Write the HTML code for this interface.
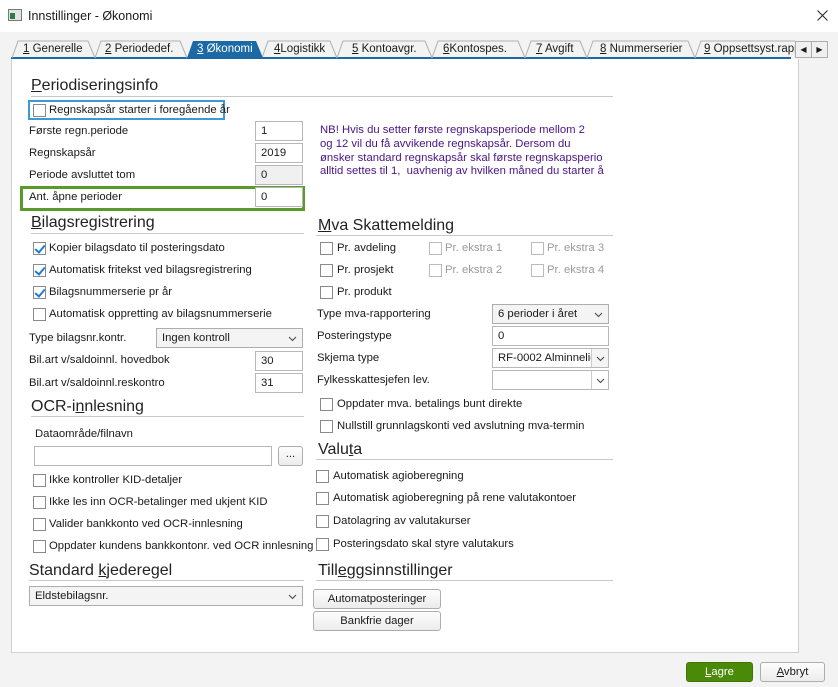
<!DOCTYPE html>
<html><head><meta charset="utf-8"><style>
*{margin:0;padding:0;box-sizing:border-box}
body{width:838px;height:687px;background:#f3f3f3;font-family:"Liberation Sans",sans-serif;font-size:11.3px;color:#1a1a1a;position:relative;overflow:hidden}
.a{position:absolute}
.t{position:absolute;font-size:11.3px;line-height:14px;white-space:nowrap}
.h{position:absolute;font-size:16px;line-height:18px;white-space:nowrap;color:#222}
.ln{position:absolute;height:1px;background:#c8c8c8}
.cb{position:absolute;width:13px;height:13px;border:1px solid #8a8a8a;background:#fff}
.cb.dis{border-color:#bbb}
.cb.on::after{content:"";position:absolute;left:3px;top:0px;width:4px;height:8px;border:solid #1e7bd0;border-width:0 2px 2px 0;transform:rotate(40deg)}
.in{position:absolute;background:#fff;border:1px solid #b8b8b8;font-size:11.3px;line-height:18px;padding-left:5px}
.sel{position:absolute;background:#f4f4f4;border:1px solid #adadad;font-size:11.3px;line-height:18px;padding-left:5px}
.sel svg{position:absolute;right:5px;top:7px}
.btn{position:absolute;background:linear-gradient(#fdfdfd,#ececec);border:1px solid #adadad;border-radius:3px;text-align:center;font-size:11.3px;line-height:18px}
.tab{position:absolute;top:41px;height:17px;font-size:11.5px;line-height:17px;white-space:nowrap}
u{text-decoration:underline}
.dis{color:#9a9a9a}
</style></head><body>
<div class="a" style="left:0;top:0;width:838px;height:32px;background:#fff"></div>
<div class="a" style="top:9px;left:8px;width:14px;height:12px;border:1px solid #777;background:#dfe6e6"><div style="position:absolute;left:1px;top:3px;width:5px;height:6px;background:#2f7a4a"></div></div>
<div class="t" style="left:28px;top:9px;font-size:12.5px">Innstillinger - Økonomi</div>
<svg class="a" style="left:817px;top:10px" width="11" height="11"><path d="M0.5 0.5 L10.5 10.5 M10.5 0.5 L0.5 10.5" stroke="#222" stroke-width="1"/></svg>

<!-- tabs -->
<div class="a" style="left:11px;top:57px;width:780px;height:2px;background:#1b6aa5"></div>
<svg class="a" style="left:0;top:40px" width="800" height="19">
<g fill="none" stroke="#b0b0b0">
<path d="M12 18 L18 1 H88 L95 18"/><path d="M95 18 L101 1 H180 L187 18"/>
<path d="M262 18 L268 1 H330 L337 18"/><path d="M337 18 L343 1 H425 L432 18"/>
<path d="M432 18 L438 1 H518 L525 18"/><path d="M525 18 L531 1 H580 L587 18"/>
<path d="M587 18 L593 1 H688 L695 18"/><path d="M695 18 L701 1 H795"/>
</g>
<path d="M187 18 L193 1 H256 L263 18 Z" fill="#1b6aa5"/>
</svg>
<div class="tab" style="left:23px"><u>1</u> Generelle</div>
<div class="tab" style="left:105px"><u>2</u> Periodedef.</div>
<div class="tab" style="left:197px;color:#fff"><u>3</u> Økonomi</div>
<div class="tab" style="left:274px"><u>4</u>Logistikk</div>
<div class="tab" style="left:352px"><u>5</u> Kontoavgr.</div>
<div class="tab" style="left:443px"><u>6</u>Kontospes.</div>
<div class="tab" style="left:536px"><u>7</u> Avgift</div>
<div class="tab" style="left:600px"><u>8</u> Nummerserier</div>
<div class="tab" style="left:704px;width:91px;overflow:hidden"><u>9</u> Oppsettsyst.rapp</div>
<div class="a" style="left:795px;top:41px;width:17px;height:17px;border:1px solid #adadad;background:#f0f0f0;font-size:8px;text-align:center;line-height:15px">◀</div>
<div class="a" style="left:811px;top:41px;width:17px;height:17px;border:1px solid #adadad;background:#f0f0f0;font-size:8px;text-align:center;line-height:15px">▶</div>

<!-- panel -->
<div class="a" style="left:11px;top:59px;width:788px;height:594px;background:#fff;border:1px solid #d0d0d0;border-top:none"></div>

<!-- Periodisering -->
<div class="h" style="left:31px;top:77px"><u>P</u>eriodiseringsinfo</div>
<div class="ln" style="left:31px;top:96px;width:582px"></div>
<div class="a" style="left:28px;top:100px;width:197px;height:20px;border:2px solid #3a9ad9"></div>
<div class="cb" style="left:33px;top:104px"></div>
<div class="t" style="left:49px;top:103px">Regnskapsår starter i foregående år</div>
<div class="t" style="left:29px;top:124px">Første regn.periode</div>
<div class="in" style="left:255px;top:121px;width:48px;height:20px">1</div>
<div class="t" style="left:29px;top:146px">Regnskapsår</div>
<div class="in" style="left:255px;top:143px;width:48px;height:20px">2019</div>
<div class="t" style="left:29px;top:168px">Periode avsluttet tom</div>
<div class="in" style="left:255px;top:165px;width:48px;height:20px;background:#f0f0f0">0</div>
<div class="a" style="left:20px;top:186px;width:285px;height:25px;border:3px solid #5a9a2a"></div>
<div class="t" style="left:29px;top:190px">Ant. åpne perioder</div>
<div class="in" style="left:255px;top:187px;width:48px;height:20px">0</div>

<div class="t" style="left:320px;top:124px;color:#4a1486;line-height:13.8px">NB! Hvis du setter første regnskapsperiode mellom 2<br>og 12 vil du få avvikende regnskapsår. Dersom du<br>ønsker standard regnskapsår skal første regnskapsperio<br>alltid settes til 1,&nbsp; uavhenig av hvilken måned du starter å</div>

<!-- Bilagsregistrering -->
<div class="h" style="left:31px;top:214px"><u>B</u>ilagsregistrering</div>
<div class="ln" style="left:31px;top:233px;width:273px"></div>
<div class="cb on" style="left:33px;top:242px"></div><div class="t" style="left:49px;top:241px">Kopier bilagsdato til posteringsdato</div>
<div class="cb on" style="left:33px;top:264px"></div><div class="t" style="left:49px;top:263px">Automatisk fritekst ved bilagsregistrering</div>
<div class="cb on" style="left:33px;top:286px"></div><div class="t" style="left:49px;top:285px">Bilagsnummerserie pr år</div>
<div class="cb" style="left:33px;top:308px"></div><div class="t" style="left:49px;top:307px">Automatisk oppretting av bilagsnummerserie</div>
<div class="t" style="left:29px;top:331px">Type bilagsnr.kontr.</div>
<div class="sel" style="left:156px;top:328px;width:147px;height:20px">Ingen kontroll<svg width="9" height="6"><path d="M1 1 L4.5 4.5 L8 1" fill="none" stroke="#444"/></svg></div>
<div class="t" style="left:29px;top:353px">Bil.art v/saldoinnl. hovedbok</div>
<div class="in" style="left:255px;top:351px;width:48px;height:20px">30</div>
<div class="t" style="left:29px;top:376px">Bil.art v/saldoinnl.reskontro</div>
<div class="in" style="left:255px;top:373px;width:48px;height:20px">31</div>

<!-- OCR -->
<div class="h" style="left:31px;top:398px">OCR-i<u>n</u>nlesning</div>
<div class="ln" style="left:31px;top:416px;width:273px"></div>
<div class="t" style="left:35px;top:427px">Dataområde/filnavn</div>
<div class="in" style="left:34px;top:446px;width:238px;height:20px"></div>
<div class="btn" style="left:278px;top:446px;width:25px;height:20px;line-height:15px">...</div>
<div class="cb" style="left:33px;top:474px"></div><div class="t" style="left:49px;top:473px">Ikke kontroller KID-detaljer</div>
<div class="cb" style="left:33px;top:496px"></div><div class="t" style="left:49px;top:495px">Ikke les inn OCR-betalinger med ukjent KID</div>
<div class="cb" style="left:33px;top:518px"></div><div class="t" style="left:49px;top:517px">Valider bankkonto ved OCR-innlesning</div>
<div class="cb" style="left:33px;top:540px"></div><div class="t" style="left:49px;top:539px">Oppdater kundens bankkontonr. ved OCR innlesning</div>

<!-- Standard kjederegel -->
<div class="h" style="left:29px;top:562px">Standard <u>k</u>jederegel</div>
<div class="ln" style="left:29px;top:580px;width:275px"></div>
<div class="sel" style="left:29px;top:586px;width:274px;height:20px">Eldstebilagsnr.<svg width="9" height="6"><path d="M1 1 L4.5 4.5 L8 1" fill="none" stroke="#444"/></svg></div>

<!-- Mva -->
<div class="h" style="left:318px;top:217px"><u>M</u>va Skattemelding</div>
<div class="ln" style="left:316px;top:235px;width:297px"></div>
<div class="cb" style="left:320px;top:242px"></div><div class="t" style="left:337px;top:241px">Pr. avdeling</div>
<div class="cb dis" style="left:429px;top:242px"></div><div class="t dis" style="left:445px;top:241px">Pr. ekstra 1</div>
<div class="cb dis" style="left:531px;top:242px"></div><div class="t dis" style="left:547px;top:241px">Pr. ekstra 3</div>
<div class="cb" style="left:320px;top:264px"></div><div class="t" style="left:337px;top:263px">Pr. prosjekt</div>
<div class="cb dis" style="left:429px;top:264px"></div><div class="t dis" style="left:445px;top:263px">Pr. ekstra 2</div>
<div class="cb dis" style="left:531px;top:264px"></div><div class="t dis" style="left:547px;top:263px">Pr. ekstra 4</div>
<div class="cb" style="left:320px;top:286px"></div><div class="t" style="left:337px;top:285px">Pr. produkt</div>
<div class="t" style="left:317px;top:307px">Type mva-rapportering</div>
<div class="sel" style="left:492px;top:304px;width:117px;height:20px">6 perioder i året<svg width="9" height="6"><path d="M1 1 L4.5 4.5 L8 1" fill="none" stroke="#444"/></svg></div>
<div class="t" style="left:317px;top:329px">Posteringstype</div>
<div class="in" style="left:492px;top:326px;width:117px;height:20px">0</div>
<div class="t" style="left:317px;top:351px">Skjema type</div>
<div class="in" style="left:492px;top:348px;width:117px;height:20px;overflow:hidden;white-space:nowrap">RF-0002 Alminnelig<div style="position:absolute;right:0;top:0;width:17px;height:18px;background:#f4f4f4;border-left:1px solid #ccc"><svg class="a" style="left:4px;top:7px" width="9" height="6"><path d="M1 1 L4.5 4.5 L8 1" fill="none" stroke="#444"/></svg></div></div>
<div class="t" style="left:317px;top:373px">Fylkesskattesjefen lev.</div>
<div class="in" style="left:492px;top:370px;width:117px;height:20px"><div style="position:absolute;right:0;top:0;width:17px;height:18px;background:#fff;border-left:1px solid #ccc"><svg class="a" style="left:4px;top:7px" width="9" height="6"><path d="M1 1 L4.5 4.5 L8 1" fill="none" stroke="#444"/></svg></div></div>
<div class="cb" style="left:320px;top:398px"></div><div class="t" style="left:337px;top:397px">Oppdater mva. betalings bunt direkte</div>
<div class="cb" style="left:320px;top:420px"></div><div class="t" style="left:337px;top:419px">Nullstill grunnlagskonti ved avslutning mva-termin</div>

<!-- Valuta -->
<div class="h" style="left:318px;top:441px">Valu<u>t</u>a</div>
<div class="ln" style="left:316px;top:459px;width:297px"></div>
<div class="cb" style="left:316px;top:470px"></div><div class="t" style="left:333px;top:469px">Automatisk agioberegning</div>
<div class="cb" style="left:316px;top:492px"></div><div class="t" style="left:333px;top:491px">Automatisk agioberegning på rene valutakontoer</div>
<div class="cb" style="left:316px;top:515px"></div><div class="t" style="left:333px;top:514px">Datolagring av valutakurser</div>
<div class="cb" style="left:316px;top:538px"></div><div class="t" style="left:333px;top:537px">Posteringsdato skal styre valutakurs</div>

<!-- Tillegg -->
<div class="h" style="left:318px;top:562px">Till<u>e</u>ggsinnstillinger</div>
<div class="ln" style="left:316px;top:580px;width:297px"></div>
<div class="btn" style="left:313px;top:589px;width:128px;height:20px">Automatposteringer</div>
<div class="btn" style="left:313px;top:611px;width:128px;height:20px">Bankfrie dager</div>

<!-- bottom buttons -->
<div class="btn" style="left:686px;top:662px;width:67px;height:20px;background:#4b8a08;border-color:#3f7507;color:#fff"><u>L</u>agre</div>
<div class="btn" style="left:760px;top:662px;width:65px;height:20px"><u>A</u>vbryt</div>
</body></html>
